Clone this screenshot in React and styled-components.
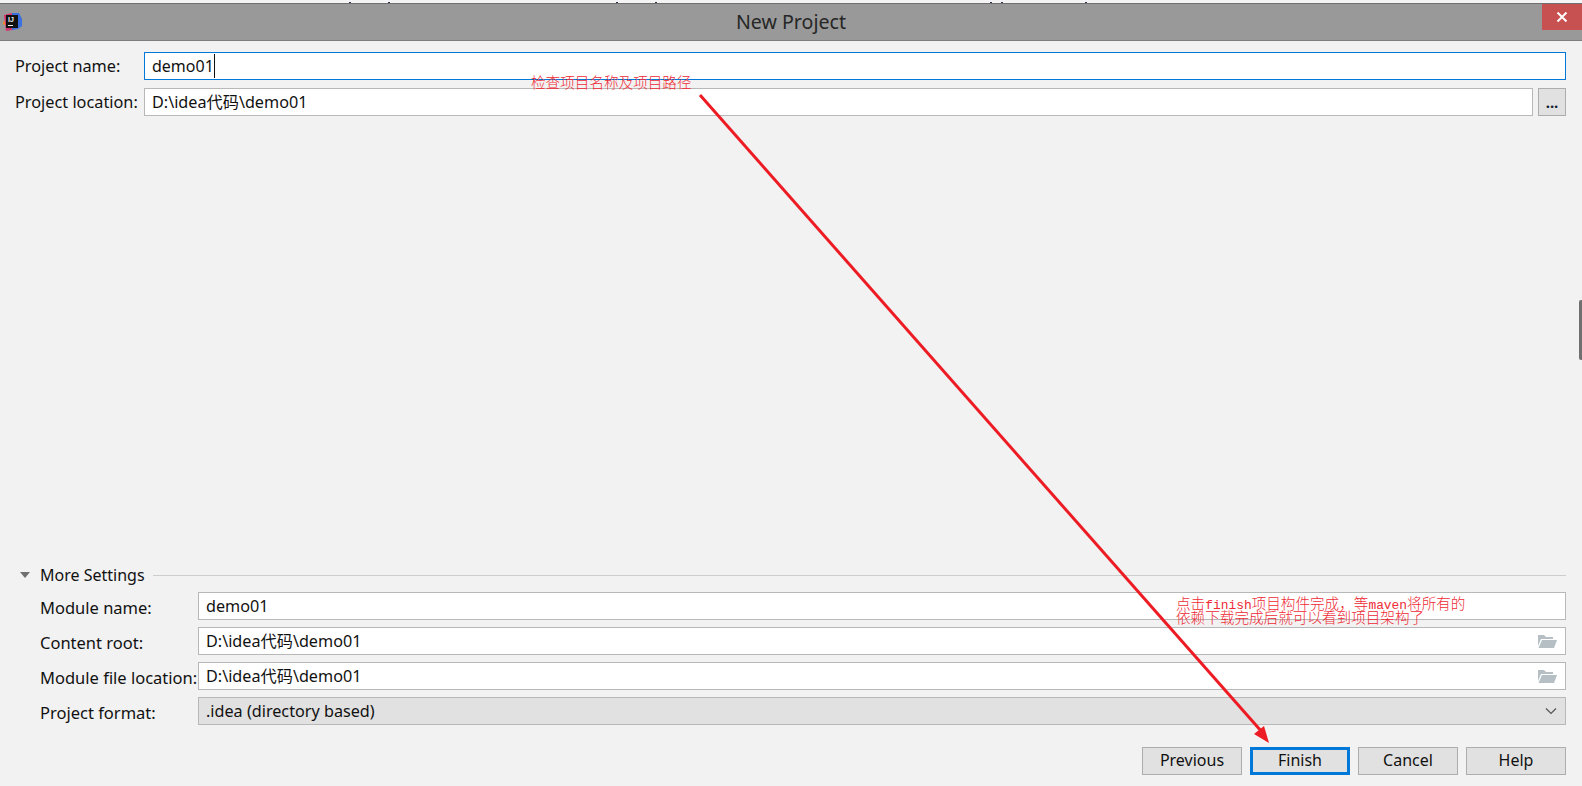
import React from "react";
import styled, { createGlobalStyle } from "styled-components";

const Global = createGlobalStyle`
html, body { margin: 0; padding: 0; background: #f2f2f2; overflow: hidden; }
body { font-family: "Noto Sans", "Noto Sans CJK SC", sans-serif; }
`;

const Page = styled.div`
position: relative;
width: 1582px;
height: 786px;
display: flex;
flex-direction: column;
background: #f2f2f2;
overflow: hidden;
color: #111;
`;

const TopStrip = styled.div`
position: relative;
height: 3px;
background: #f4f4f4;
border-bottom: 1px solid #6f6f6f;
`;

const Tick = styled.span`
position: absolute;
left: ${(p) => p.$x}px;
top: 2px;
width: 2px;
height: 1px;
background: #26324f;
`;

const TitleBar = styled.div`
height: 36px;
background: #999999;
border-bottom: 1px solid #7d7d7d;
display: flex;
align-items: flex-start;
justify-content: space-between;
position: relative;
`;

const Title = styled.div`
position: absolute;
left: 0;
right: 0;
top: 6px;
text-align: center;
font-size: 19.6px;
line-height: 24px;
color: #262626;
`;

const CloseBtn = styled.div`
width: 40px;
height: 26px;
background: #c75050;
display: flex;
align-items: center;
justify-content: center;
`;

const Body = styled.div`
flex: 1;
display: flex;
flex-direction: column;
padding: 11px 16px 0 15px;
`;

const Row = styled.div`
display: flex;
align-items: center;
height: 28px;
margin-bottom: ${(p) => p.$gap || 8}px;
`;

const Label = styled.div`
width: ${(p) => p.$w}px;
flex: none;
font-size: 16.3px;
line-height: 20px;
white-space: nowrap;
`;

const SettingLabel = styled(Label)`
width: 158px;
font-size: 16.5px;
padding-top: 4px;
`;

const Field = styled.div`
flex: 1;
height: 28px;
box-sizing: border-box;
display: flex;
align-items: center;
justify-content: space-between;
padding: 0 8px 0 7px;
font-size: 16.2px;
line-height: 24px;
background: ${(p) => (p.$select ? "#e1e1e1" : "#fff")};
border: 1px solid ${(p) => (p.$focus ? "#0078d7" : "#b8b8b8")};
`;

const Caret = styled.span`
display: inline-block;
width: 1px;
height: 24px;
background: #111;
`;

const FieldText = styled.div`
display: flex;
align-items: center;
font-size: 16px;
`;

const DotsBtn = styled.div`
width: 28px;
height: 28px;
box-sizing: border-box;
margin-left: 5px;
flex: none;
background: #e1e1e1;
border: 1px solid #adadad;
display: flex;
align-items: center;
justify-content: center;
font-size: 15px;
font-weight: 700;
color: #123;
`;

const Spacer = styled.div`
flex: 1;
`;

const MoreHead = styled.div`
display: flex;
align-items: center;
height: 20px;
margin-bottom: 7px;
padding-left: 4px;
font-size: 16px;
`;

const MoreTitle = styled.span`
margin: 0 8px 0 9px;
`;

const Rule = styled.div`
flex: 1;
height: 1px;
background: #cdcdcd;
`;

const MoreBody = styled.div`
padding-left: 25px;
`;

const Footer = styled.div`
display: flex;
justify-content: flex-end;
gap: 8px;
margin-top: 15px;
height: 39px;
`;

const Btn = styled.div`
width: 100px;
height: 28px;
box-sizing: border-box;
padding-bottom: 2px;
background: #e1e1e1;
border: ${(p) => (p.$primary ? "3px solid #0078d7" : "1px solid #adadad")};
display: flex;
align-items: center;
justify-content: center;
font-size: 16px;
`;

const Note = styled.div`
position: absolute;
left: ${(p) => p.$x}px;
top: ${(p) => p.$y}px;
font-family: "Noto Sans CJK SC", sans-serif;
font-size: 14.6px;
font-weight: 300;
line-height: 14px;
color: #ee2a35;
white-space: pre;
`;

const NoteLatin = styled.span`
font-family: "Liberation Mono", monospace;
font-size: 12.9px;
`;

const Overlay = styled.svg`
position: absolute;
left: 0;
top: 0;
pointer-events: none;
`;

const ScrollHandle = styled.div`
position: absolute;
right: 0;
top: 300px;
width: 3px;
height: 60px;
background: #707070;
border-radius: 2px 0 0 2px;
`;

const IconWrap = styled.svg`
margin: 8px 0 0 3px;
`;

const AppIcon = () => (
  <IconWrap width="20" height="20" viewBox="0 0 20 20">
    <circle cx="2" cy="11" r="2" fill="#f58a1f" />
    <path d="M1 3 L9 1 L9 18 L3 19Z" fill="#d6336c" />
    <path d="M9 1 L16 1 L19 7 L19 14 L15 17 L9 18Z" fill="#3a6fe0" />
    <rect x="3" y="3" width="12" height="13" fill="#111" />
    <rect x="5" y="13" width="5" height="1" fill="#eee" />
    <text x="5" y="10" fontSize="7" fontWeight="700" fontFamily="Liberation Sans" fill="#eee">IJ</text>
  </IconWrap>
);

const FolderIcon = () => (
  <svg width="20" height="14" viewBox="0 0 20 14">
    <path d="M1 1 H7 L9 3 H16 V5 H4 L1 12Z" fill="#b5bfc4" />
    <path d="M5 6 H20 L17 14 H1.500Z" fill="#b5bfc4" />
  </svg>
);

const Chevron = () => (
  <svg width="12" height="8" viewBox="0 0 12 8">
    <path d="M1 1.500 L6 6.500 L11 1.500" fill="none" stroke="#555" strokeWidth="1.200" />
  </svg>
);

const ticks = [349, 388, 616, 655, 990, 1001, 1085];

export default function App() {
  return (
    <Page>
      <Global />
      <TopStrip>
        {ticks.map((x) => <Tick key={x} $x={x} />)}
      </TopStrip>
      <TitleBar>
        <AppIcon />
        <Title>New Project</Title>
        <CloseBtn>
          <svg width="12" height="10" viewBox="0 0 12 10">
            <path d="M1.500 0.500 L10.500 9.500 M10.500 0.500 L1.500 9.500" stroke="#fff" strokeWidth="2" />
          </svg>
        </CloseBtn>
      </TitleBar>
      <Body>
        <Row>
          <Label $w={129}>Project name:</Label>
          <Field $focus>
            <FieldText>demo01<Caret /></FieldText>
          </Field>
        </Row>
        <Row>
          <Label $w={129}>Project location:</Label>
          <Field>D:\idea代码\demo01</Field>
          <DotsBtn>...</DotsBtn>
        </Row>
        <Spacer />
        <MoreHead>
          <svg width="12" height="8" viewBox="0 0 12 8"><path d="M1 1 H11 L6 7Z" fill="#707070" /></svg>
          <MoreTitle>More Settings</MoreTitle>
          <Rule />
        </MoreHead>
        <MoreBody>
          <Row $gap={7}>
            <SettingLabel>Module name:</SettingLabel>
            <Field>demo01</Field>
          </Row>
          <Row $gap={7}>
            <SettingLabel>Content root:</SettingLabel>
            <Field>D:\idea代码\demo01<FolderIcon /></Field>
          </Row>
          <Row $gap={7}>
            <SettingLabel>Module file location:</SettingLabel>
            <Field>D:\idea代码\demo01<FolderIcon /></Field>
          </Row>
          <Row $gap={7}>
            <SettingLabel>Project format:</SettingLabel>
            <Field $select>.idea (directory based)<Chevron /></Field>
          </Row>
        </MoreBody>
        <Footer>
          <Btn>Previous</Btn>
          <Btn $primary>Finish</Btn>
          <Btn>Cancel</Btn>
          <Btn>Help</Btn>
        </Footer>
      </Body>
      <ScrollHandle />
      <Overlay width="1582" height="786" viewBox="0 0 1582 786">
        <line x1="700" y1="95" x2="1262" y2="732" stroke="#ed1c24" strokeWidth="3" />
        <path d="M1269 743 L1254 734 L1264 726Z" fill="#ed1c24" />
      </Overlay>
      <Note $x={531} $y={75}>检查项目名称及项目路径</Note>
      <Note $x={1176} $y={596}>点击<NoteLatin>finish</NoteLatin>项目构件完成，等<NoteLatin>maven</NoteLatin>将所有的</Note>
      <Note $x={1176} $y={610}>依赖下载完成后就可以看到项目架构了</Note>
    </Page>
  );
}
